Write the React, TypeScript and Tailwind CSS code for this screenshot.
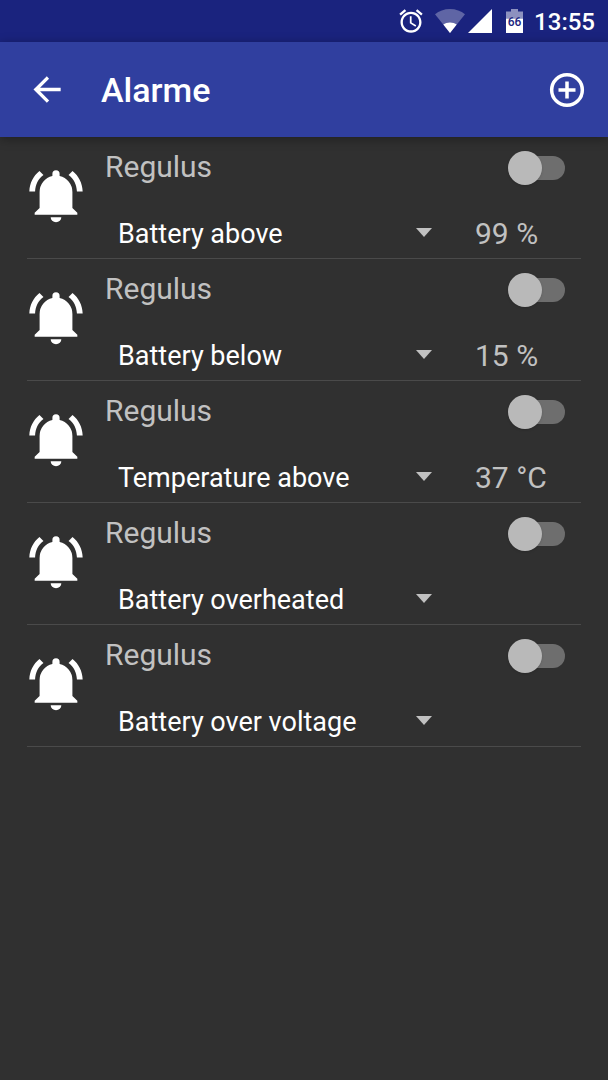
import React, { useState } from 'react';

interface Alarm {
  id: string;
  device: string;
  trigger: string;
  value?: string;
  enabled: boolean;
}

const TRIGGERS = [
  'Battery above',
  'Battery below',
  'Temperature above',
  'Battery overheated',
  'Battery over voltage',
];

const INITIAL_ALARMS: Alarm[] = [
  { id: 'a1', device: 'Regulus', trigger: 'Battery above', value: '99 %', enabled: false },
  { id: 'a2', device: 'Regulus', trigger: 'Battery below', value: '15 %', enabled: false },
  { id: 'a3', device: 'Regulus', trigger: 'Temperature above', value: '37 °C', enabled: false },
  { id: 'a4', device: 'Regulus', trigger: 'Battery overheated', enabled: false },
  { id: 'a5', device: 'Regulus', trigger: 'Battery over voltage', enabled: false },
];

const BellIcon = () => (
  <svg viewBox="0 0 24 24" className="size-16 shrink-0 fill-white" aria-hidden="true">
    <path d="M7.3 4.1L5.8 2.65C3.5 4.48 2.1 7.2 2 10.3h2.15C4.3 7.7 5.3 5.5 7.3 4.1z" />
    <path d="M16.7 4.1L18.2 2.65C20.5 4.48 21.9 7.2 22 10.3h-2.15C19.7 7.7 18.7 5.5 16.7 4.1z" />
    <path d="M12 2.3a1.35 1.35 0 0 0-1.35 1.35v.85A6.15 6.15 0 0 0 5.85 10.5v6L4 18.3v.7h16v-.7l-1.85-1.8v-6a6.15 6.15 0 0 0-4.8-6v-.85A1.35 1.35 0 0 0 12 2.3z" />
    <path d="M10 19.95h4a2 1.9 0 0 1-4 0z" />
  </svg>
);

const StatusBar = () => (
  <div className="flex h-[42px] items-center justify-end bg-[#1a237e] pr-[13px] text-white">
    <svg viewBox="0 0 24 24" className="size-7 fill-white" aria-hidden="true">
      <path d="M22 5.72l-4.6-3.86-1.29 1.53 4.6 3.86L22 5.72zM7.88 3.39L6.6 1.86 2 5.71l1.29 1.53 4.59-3.85zM12.5 8H11v6l4.75 2.85.75-1.23-4-2.37V8zM12 4c-4.97 0-9 4.03-9 9s4.02 9 9 9c4.97 0 9-4.03 9-9s-4.03-9-9-9zm0 16c-3.87 0-7-3.13-7-7s3.13-7 7-7 7 3.13 7 7-3.13 7-7 7z" />
    </svg>
    <svg viewBox="0 0 30 24" className="ml-[10px] h-6 w-[30px] fill-white" aria-hidden="true">
      <path d="M15 24L0 5.2C4 2 9.2 0 15 0s11 2 15 5.2z" fillOpacity="0.3" />
      <path d="M15 24L8.3 15.6C10 14.3 12.4 13.4 15 13.4s5 .9 6.7 2.2z" />
    </svg>
    <svg viewBox="0 0 24 24" className="ml-[3px] size-6 fill-white" aria-hidden="true">
      <path d="M0 24L24 0V24z" />
    </svg>
    <svg viewBox="0 0 17 24" className="ml-[14px] h-6 w-[17px]" aria-hidden="true">
      <path d="M0 9.5V2.5H5V0h7v2.5h5v7z" fill="#fff" fillOpacity="0.5" />
      <path d="M0 9.5h17V24H0z" fill="#fff" />
      <text
        x="8.5"
        y="17"
        textAnchor="middle"
        fontSize="12"
        fontWeight="500"
        fontFamily="Roboto, sans-serif"
        fill="#1a237e"
      >
        66
      </text>
    </svg>
    <span className="ml-[11px] pt-[2px] text-2xl font-medium">13:55</span>
  </div>
);

const Header = () => (
  <header className="relative z-10 flex h-[95px] items-center bg-[#303f9f] pr-[21px] pl-[27px] text-white shadow-[0_2px_10px_rgba(0,0,0,0.35)]">
    <button type="button" aria-label="Back" className="size-10">
      <svg viewBox="0 0 24 24" className="size-10 fill-white" aria-hidden="true">
        <path d="M20.2 10.7H7.83l5.4-5.4L11.9 3.8 3.9 11.7l8 8 1.41-1.41L7.83 12.8H20.2z" />
      </svg>
    </button>
    <h1 className="ml-[34px] flex-1 pt-[2px] text-[34px] font-medium">Alarme</h1>
    <button type="button" aria-label="Add alarm" className="size-10">
      <svg viewBox="0 0 24 24" className="size-10 fill-none stroke-white" aria-hidden="true">
        <circle cx="12" cy="12" r="9.2" strokeWidth="2.1" />
        <path d="M12 6.9v10.2M6.9 12h10.2" strokeWidth="2.1" />
      </svg>
    </button>
  </header>
);

interface AlarmRowProps {
  alarm: Alarm;
  onChange: (patch: Partial<Alarm>) => void;
}

const AlarmRow: React.FC<AlarmRowProps> = ({ alarm, onChange }) => (
  <li className="flex border-b border-[#4a4a4a]">
    <div className="-ml-[3px] pt-[27px]">
      <BellIcon />
    </div>

    <div className="ml-[17px] flex-1">
      {/* Device name and switch */}
      <div className="flex h-[62px] items-center justify-between pr-4">
        <label htmlFor={`${alarm.id}-switch`} className="pb-1 text-[30px] text-[#c1c1c1]">
          {alarm.device}
        </label>
        <span className="relative flex h-[34px] w-[57px] items-center justify-end">
          <input
            id={`${alarm.id}-switch`}
            type="checkbox"
            role="switch"
            checked={alarm.enabled}
            onChange={(e) => onChange({ enabled: e.target.checked })}
            className="peer h-6 w-[52px] appearance-none rounded-full bg-[#6e6e6e] checked:bg-[#5c6bc0]"
          />
          <span className="pointer-events-none absolute top-0 left-0 size-[34px] rounded-full bg-[#b9b9b9] shadow-sm transition-transform peer-checked:translate-x-6" />
        </span>
      </div>

      {/* Trigger and threshold */}
      <div className="flex h-[59px] items-center pt-3">
        <div className="relative flex w-[336px] items-start">
          <select
            aria-label="Trigger"
            value={alarm.trigger}
            onChange={(e) => onChange({ trigger: e.target.value })}
            className="w-full appearance-none bg-transparent pl-[13px] text-[27px] text-white"
          >
            {TRIGGERS.map(trigger => (
              <option key={trigger} value={trigger}>{trigger}</option>
            ))}
          </select>
          <svg
            viewBox="0 0 16 9"
            className="pointer-events-none absolute top-[14px] right-[9px] h-[9px] w-4 fill-[#c1c1c1]"
            aria-hidden="true"
          >
            <path d="M0 0h16L8 9z" />
          </svg>
        </div>
        {alarm.value && (
          <button type="button" className="ml-[34px] pb-[2px] text-[30px] text-[#c1c1c1]">
            {alarm.value}
          </button>
        )}
      </div>
    </div>
  </li>
);

export default function App() {
  const [alarms, setAlarms] = useState(INITIAL_ALARMS);

  const updateAlarm = (id: string, patch: Partial<Alarm>) => {
    setAlarms(prev => prev.map(alarm => alarm.id === id ? { ...alarm, ...patch } : alarm));
  };

  return (
    <div className="min-h-screen bg-[#303030] font-[Roboto,sans-serif]">
      <StatusBar />
      <Header />
      <ul className="px-[27px]">
        {alarms.map(alarm => (
          <AlarmRow
            key={alarm.id}
            alarm={alarm}
            onChange={(patch) => updateAlarm(alarm.id, patch)}
          />
        ))}
      </ul>
    </div>
  );
}
